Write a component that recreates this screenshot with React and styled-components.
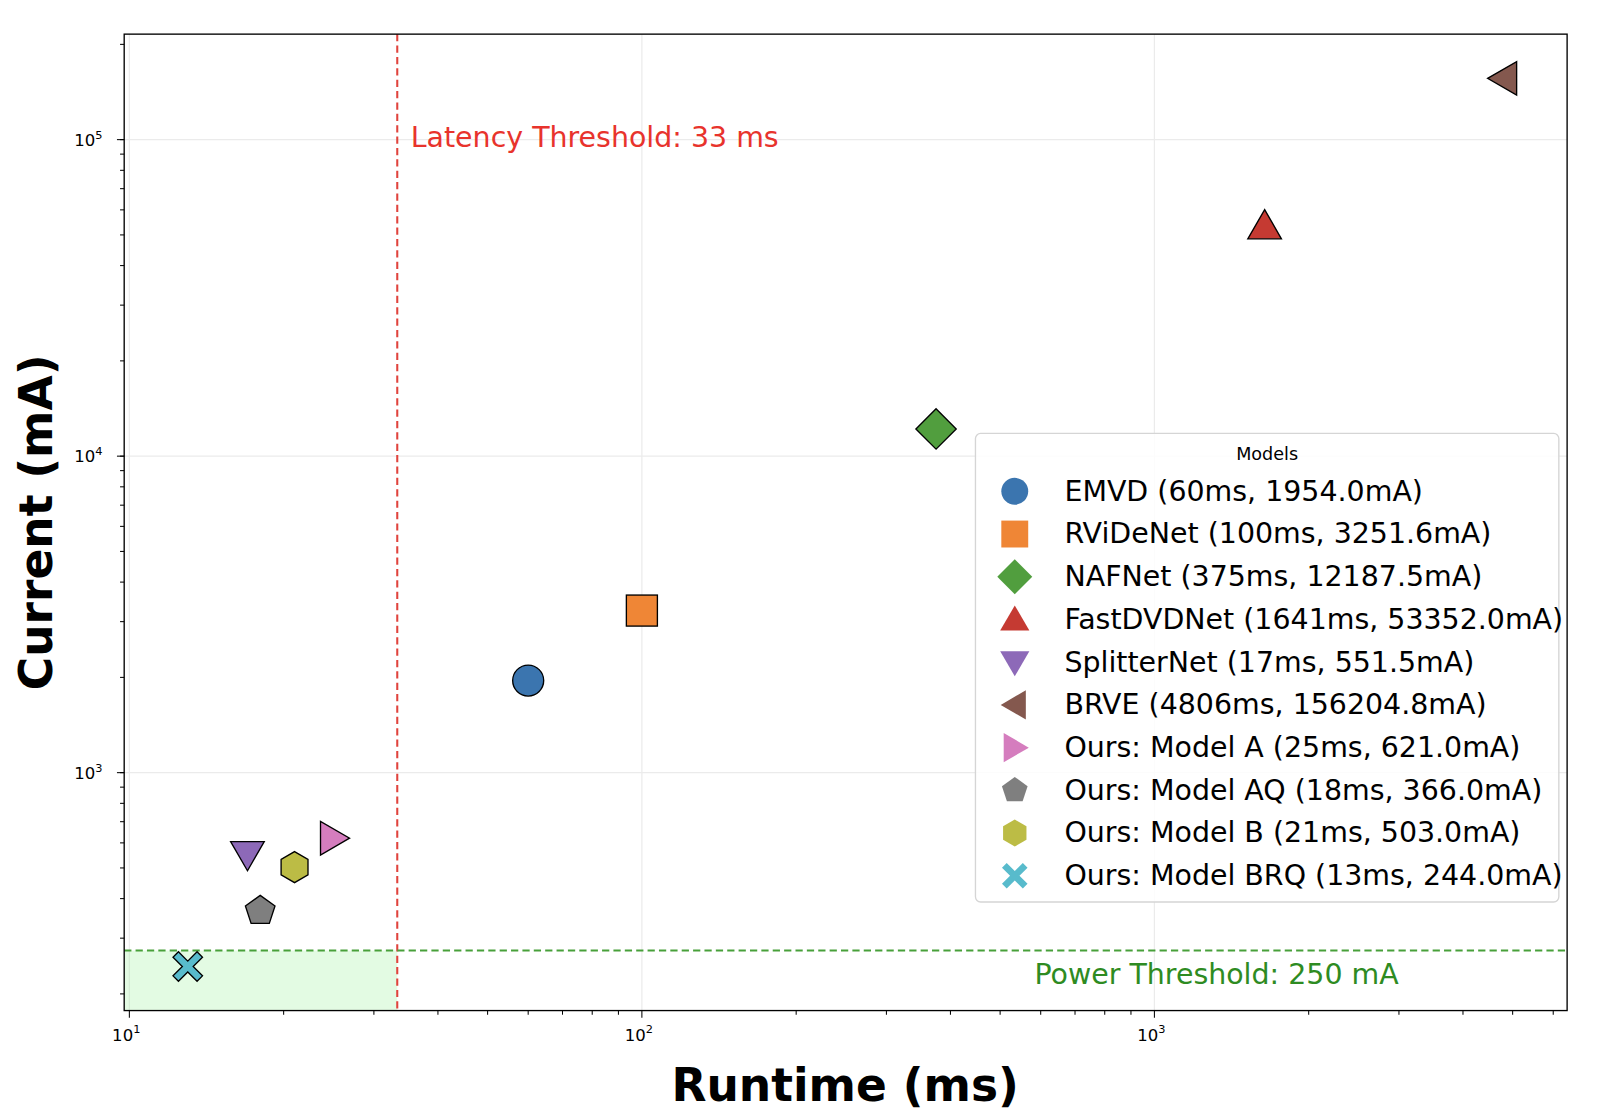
import React from "react";
import styled, { createGlobalStyle } from "styled-components";

const Global = createGlobalStyle`
  html, body { margin: 0; padding: 0; background: #fff; }
  body { font-family: "DejaVu Sans", sans-serif; }
`;
const Page = styled.div`
  width: 1622px; height: 1114px; background: #fff;
`;
const Chart = styled.svg`
  display: block; font-family: "DejaVu Sans", sans-serif;
`;

const X0 = 120, X1 = 1515, Y0 = 33, Y1 = 977;
const xs = (v) => 125 + 495.5 * Math.log10(v / 10);
const ys = (v) => 747 - 306 * Math.log10(v / 1000);

const models = [
  { name: "EMVD (60ms, 1954.0mA)", t: 60, c: 1954, color: "#3b75af", m: "circle" },
  { name: "RViDeNet (100ms, 3251.6mA)", t: 100, c: 3251.6, color: "#ef8636", m: "square" },
  { name: "NAFNet (375ms, 12187.5mA)", t: 375, c: 12187.5, color: "#519e3e", m: "diamond" },
  { name: "FastDVDNet (1641ms, 53352.0mA)", t: 1641, c: 53352, color: "#c53a32", m: "tri_up" },
  { name: "SplitterNet (17ms, 551.5mA)", t: 17, c: 551.5, color: "#8d69b8", m: "tri_down" },
  { name: "BRVE (4806ms, 156204.8mA)", t: 4806, c: 156204.8, color: "#84584e", m: "tri_left" },
  { name: "Ours: Model A (25ms, 621.0mA)", t: 25, c: 621, color: "#d57dbe", m: "tri_right" },
  { name: "Ours: Model AQ (18ms, 366.0mA)", t: 18, c: 366, color: "#7f7f7f", m: "pentagon" },
  { name: "Ours: Model B (21ms, 503.0mA)", t: 21, c: 503, color: "#bcbc45", m: "hexagon" },
  { name: "Ours: Model BRQ (13ms, 244.0mA)", t: 13, c: 244, color: "#58bbcc", m: "x" },
];

function poly(cx, cy, r, n, rot) {
  const pts = [];
  for (let i = 0; i < n; i++) {
    const a = rot + (i * 2 * Math.PI) / n;
    pts.push(`${(cx + r * Math.cos(a)).toFixed(1)},${(cy + r * Math.sin(a)).toFixed(1)}`);
  }
  return pts.join(" ");
}

function Marker({ m, x, y, s, color, edge }) {
  const st = edge ? { stroke: "#000", strokeWidth: 1.3 } : { stroke: "none" };
  const up = -Math.PI / 2;
  switch (m) {
    case "circle": return <circle cx={x} cy={y} r={s} fill={color} {...st} />;
    case "square": return <rect x={x - s} y={y - s} width={2 * s} height={2 * s} fill={color} {...st} />;
    case "diamond": return <polygon points={poly(x, y, s * 1.3, 4, up)} fill={color} {...st} />;
    case "tri_up": return <polygon points={poly(x, y + s * 0.2, s * 1.25, 3, up)} fill={color} {...st} />;
    case "tri_down": return <polygon points={poly(x, y - s * 0.2, s * 1.25, 3, Math.PI / 2)} fill={color} {...st} />;
    case "tri_left": return <polygon points={poly(x + s * 0.2, y, s * 1.25, 3, Math.PI)} fill={color} {...st} />;
    case "tri_right": return <polygon points={poly(x - s * 0.2, y, s * 1.25, 3, 0)} fill={color} {...st} />;
    case "pentagon": return <polygon points={poly(x, y, s, 5, up)} fill={color} {...st} />;
    case "hexagon": return <polygon points={poly(x, y, s, 6, up)} fill={color} {...st} />;
    case "x": {
      const a = s * 0.95, w = s * 0.35;
      const d = `M${x - a + w},${y - a} L${x},${y - w} L${x + a - w},${y - a} L${x + a},${y - a + w} L${x + w},${y} L${x + a},${y + a - w} L${x + a - w},${y + a} L${x},${y + w} L${x - a + w},${y + a} L${x - a},${y + a - w} L${x - w},${y} L${x - a},${y - a + w} Z`;
      return <path d={d} fill={color} {...st} />;
    }
    default: return null;
  }
}

export default function App() {
  const xMinor = [], yMinor = [];
  [10, 100, 1000].forEach((d) => { for (let k = 2; k <= 9; k++) { const x = xs(d * k); if (x < X1) xMinor.push(x); } });
  [100, 1000, 10000, 100000].forEach((d) => { for (let k = 1; k <= 9; k++) { const y = ys(d * k); if (y > Y0 && y < Y1) yMinor.push(y); } });
  const xMaj = [[10, "1"], [100, "2"], [1000, "3"]];
  const yMaj = [[100000, "5"], [10000, "4"], [1000, "3"]];
  return (
    <Page>
      <Global />
      <Chart width="1622" height="1114" viewBox="0 0 1568 1077">
        {xMaj.map(([v]) => <line key={v} x1={xs(v)} x2={xs(v)} y1={Y0} y2={Y1} stroke="#ebebeb" strokeWidth="1.2" />)}
        {yMaj.map(([v]) => <line key={v} x1={X0} x2={X1} y1={ys(v)} y2={ys(v)} stroke="#ebebeb" strokeWidth="1.2" />)}
        <rect x={X0} y={919} width={384 - X0} height={Y1 - 919} fill="#90ee90" opacity="0.25" />
        <line x1={384} x2={384} y1={Y0} y2={Y1} stroke="#e0433d" strokeWidth="2" strokeDasharray="7 4" />
        <line x1={X0} x2={X1} y1={919} y2={919} stroke="#48a03a" strokeWidth="2" strokeDasharray="7 4" />
        <text x={397} y={142} fontSize="27.5" fill="#e8332c">Latency Threshold: 33 ms</text>
        <text x={1000} y={951} fontSize="27.5" fill="#2e8b22">Power Threshold: 250 mA</text>
        {models.map((d) => (
          <Marker key={d.name} m={d.m} x={xs(d.t)} y={ys(d.c)} s={15} color={d.color} edge />
        ))}
        <rect x={X0} y={Y0} width={X1 - X0} height={Y1 - Y0} fill="none" stroke="#000" strokeWidth="1.3" />
        {xMinor.map((x, i) => <line key={i} x1={x} x2={x} y1={Y1} y2={Y1 + 4} stroke="#000" />)}
        {yMinor.map((y, i) => <line key={i} x1={X0} x2={X0 - 4} y1={y} y2={y} stroke="#000" />)}
        {xMaj.map(([v, e]) => (
          <g key={v}>
            <line x1={xs(v)} x2={xs(v)} y1={Y1} y2={Y1 + 7} stroke="#000" />
            <text x={xs(v) - 3} y={Y1 + 29} fontSize="16" textAnchor="middle">10<tspan fontSize="11" dy="-7">{e}</tspan></text>
          </g>
        ))}
        {yMaj.map(([v, e]) => (
          <g key={v}>
            <line x1={X0} x2={X0 - 7} y1={ys(v)} y2={ys(v)} stroke="#000" />
            <text x={X0 - 21} y={ys(v) + 6} fontSize="16" textAnchor="end">10<tspan fontSize="11" dy="-7">{e}</tspan></text>
          </g>
        ))}
        <text x={817} y={1064} fontSize="44" fontWeight="bold" textAnchor="middle">Runtime (ms)</text>
        <text transform="translate(50 505) rotate(-90)" fontSize="44" fontWeight="bold" textAnchor="middle">Current (mA)</text>
        <rect x={943} y={419} width={564} height={453} rx="5" fill="#fff" fillOpacity="0.85" stroke="#d5d5d5" strokeWidth="1.3" />
        <text x={1225} y={445} fontSize="17" textAnchor="middle">Models</text>
        {models.map((d, i) => {
          const y = 475 + i * 41.3;
          return (
            <g key={d.name}>
              <Marker m={d.m} x={981} y={y} s={13} color={d.color} />
              <text x={1029} y={y + 9} fontSize="27.5">{d.name}</text>
            </g>
          );
        })}
      </Chart>
    </Page>
  );
}
